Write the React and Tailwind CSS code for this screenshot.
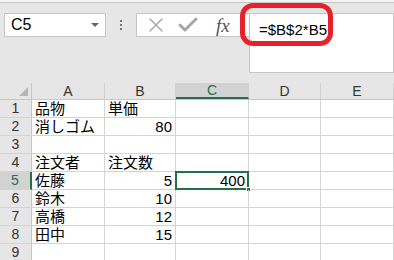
import { X, Check } from 'lucide-react';

const cols = ['A', 'B', 'C', 'D', 'E'];
const widths = ['w-[73px]', 'w-[71px]', 'w-[73px]', 'w-[72px]', 'w-[73px]'];

const rows = [
  { n: 1, a: '品物', b: '単価' },
  { n: 2, a: '消しゴム', b: '80' },
  { n: 3, a: '', b: '' },
  { n: 4, a: '注文者', b: '注文数' },
  { n: 5, a: '佐藤', b: '5', c: '400' },
  { n: 6, a: '鈴木', b: '10' },
  { n: 7, a: '高橋', b: '12' },
  { n: 8, a: '田中', b: '15' },
  { n: 9, a: '', b: '' },
];

const font = { fontFamily: '"Liberation Sans", "Noto Sans CJK JP", sans-serif' };

const Toolbar = () => (
  <div className="relative h-[83px] bg-[#e6e6e6]">
    <div className="h-[3px] bg-[#f3f3f3] border-b border-[#c6c6c6]" />
    <div className="flex items-start pt-[10px] pl-[4px]">
      {/* Name box */}
      <div className="flex items-center justify-between w-[102px] h-[24px] bg-white border border-[#c6c6c6] pl-[6px] pr-[6px]">
        <span className="text-[16px] text-black leading-none" style={font}>C5</span>
        <span className="w-0 h-0 border-l-[4px] border-r-[4px] border-t-[4px] border-l-transparent border-r-transparent border-t-[#666]" />
      </div>
      {/* dots */}
      <div className="w-[30px] h-[24px] flex flex-col items-center justify-center gap-[2px]">
        <span className="w-[2px] h-[2px] bg-[#777]" />
        <span className="w-[2px] h-[2px] bg-[#777]" />
        <span className="w-[2px] h-[2px] bg-[#777]" />
      </div>
      {/* cancel / enter / fx */}
      <div className="flex items-center w-[113px] h-[24px] bg-white border border-[#c6c6c6] border-r-0">
        <X size={24} strokeWidth={1.4} className="text-[#a6a6a6] ml-[7px]" />
        <Check size={24} strokeWidth={3} className="text-[#a6a6a6] ml-[8px]" />
        <span className="ml-[16px] text-[19px] italic text-[#555] leading-none" style={{ fontFamily: '"Liberation Serif", serif' }}>
          fx
        </span>
      </div>
      {/* formula bar */}
      <div className="flex-1 h-[60px] bg-white border border-[#c6c6c6] pl-[9px] pt-[3px]">
        <span className="text-[15px] text-black" style={font}>=$B$2*B5</span>
      </div>
    </div>
    {/* red annotation */}
    <div className="absolute left-[240px] top-[3px] w-[93px] h-[43px] border-[5px] border-[#e8202a] rounded-[13px]" />
  </div>
);

const Sheet = () => (
  <div className="bg-white" style={font}>
    <div className="flex h-[17px] bg-[#e6e6e6] border-b border-[#c6c6c6]">
      <div className="w-[32px] shrink-0 border-r border-[#c6c6c6] flex items-end justify-end pr-[3px] pb-[3px]">
        <svg width="9" height="9" viewBox="0 0 9 9">
          <polygon points="9,0 9,9 0,9" fill="#b5b5b5" />
        </svg>
      </div>
      {cols.map((c, i) => (
        <div
          key={c}
          className={`${widths[i]} shrink-0 flex items-center justify-center text-[14px] border-r border-[#d0d0d0] ${
            c === 'C' ? 'bg-[#d2d2d2] text-[#217346] border-b-2 border-b-[#217346]' : 'text-[#333]'
          }`}
        >
          {c}
        </div>
      ))}
    </div>
    {rows.map((r) => (
      <div key={r.n} className="flex h-[18px]">
        <div
          className={`w-[32px] shrink-0 flex items-center justify-center text-[14px] border-b border-[#d4d4d4] ${
            r.n === 5 ? 'bg-[#d2d2d2] text-[#217346] border-r-2 border-r-[#217346]' : 'bg-[#e6e6e6] text-[#333] border-r border-r-[#c6c6c6]'
          }`}
        >
          {r.n}
        </div>
        <div className="w-[73px] shrink-0 border-r border-b border-[#d4d4d4] pl-[3px] text-[15px] leading-[17px] text-black">
          {r.a}
        </div>
        <div className={`w-[71px] shrink-0 border-r border-b border-[#d4d4d4] pr-[3px] text-[15px] leading-[17px] text-black ${/^\d+$/.test(r.b) ? 'text-right' : 'pl-[3px]'}`}>
          {r.b}
        </div>
        <div className="relative w-[73px] shrink-0 border-r border-b border-[#d4d4d4] pr-[3px] text-right text-[15px] leading-[17px] text-black">
          {r.c}
          {r.n === 5 && (
            <>
              <div className="absolute -left-[1px] -top-[1px] -right-[1px] -bottom-[1px] border-2 border-[#217346]" />
              <div className="absolute -right-[3px] -bottom-[3px] w-[5px] h-[5px] bg-[#217346] border border-white" />
            </>
          )}
        </div>
        <div className="w-[72px] shrink-0 border-r border-b border-[#d4d4d4]" />
        <div className="w-[73px] shrink-0 border-r border-b border-[#d4d4d4]" />
      </div>
    ))}
  </div>
);

export default function App() {
  return (
    <div className="w-[394px] h-[260px] overflow-hidden bg-white">
      <Toolbar />
      <Sheet />
    </div>
  );
}
